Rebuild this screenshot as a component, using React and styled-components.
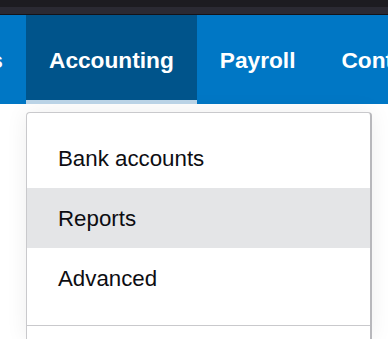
import React from "react"
import styled, { createGlobalStyle } from "styled-components"

const GlobalStyle = createGlobalStyle`
  body {
    margin: 0;
    background: #ffffff;
    font-family: "Liberation Sans", Arial, sans-serif;
    overflow: hidden;
  }
`

const Chrome = styled.div`
  height: 14px;
  background: linear-gradient(#1d1c21 0, #1d1c21 7px, #2b2a33 7px, #2b2a33 14px);
  border-bottom: 1px solid #141318;
`

const Nav = styled.nav`
  display: flex;
  height: 89px;
  background: #0077c5;
  overflow: hidden;
  white-space: nowrap;
`

const Clip = styled.div`
  display: flex;
  justify-content: flex-end;
  width: 26px;
  flex: none;
  overflow: hidden;
`

const Tab = styled.a`
  display: flex;
  align-items: center;
  flex: none;
  box-sizing: border-box;
  height: 100%;
  padding: 6px 23px 0;
  color: #ffffff;
  font-size: 22.7px;
  font-weight: 700;
  text-decoration: none;
  background: ${(p) => (p.$active ? "#00548b" : "transparent")};
  border-bottom: 4px solid ${(p) => (p.$active ? "#bad3e6" : "transparent")};
`

const Menu = styled.ul`
  list-style: none;
  margin: 8px 16px 0 26px;
  padding: 15px 0 13px;
  background: #ffffff;
  border: 1px solid #c9c9cc;
  border-right: 2px solid #b8b8bc;
  border-bottom: none;
  border-radius: 4px 4px 0 0;
  box-shadow: 0 0 22px rgba(0, 0, 0, 0.07);
`

const Item = styled.li`
  display: flex;
  align-items: center;
  height: 60px;
  padding: 1px 0 0 31px;
  box-sizing: border-box;
  font-size: 22.3px;
  color: #0d0d12;
  background: ${(p) => (p.$hover ? "#e4e5e7" : "transparent")};
`

const Divider = styled.li`
  margin-top: 17px;
  border-top: 1px solid #c9c9cc;
`

export default function App() {
  return (
    <>
      <GlobalStyle />
      <Chrome />
      <Nav>
        <Clip>
          <Tab href="#">Sales</Tab>
        </Clip>
        <Tab href="#" $active>
          Accounting
        </Tab>
        <Tab href="#">Payroll</Tab>
        <Tab href="#">Contacts</Tab>
      </Nav>
      <Menu>
        <Item>Bank accounts</Item>
        <Item $hover>Reports</Item>
        <Item>Advanced</Item>
        <Divider />
      </Menu>
    </>
  )
}
